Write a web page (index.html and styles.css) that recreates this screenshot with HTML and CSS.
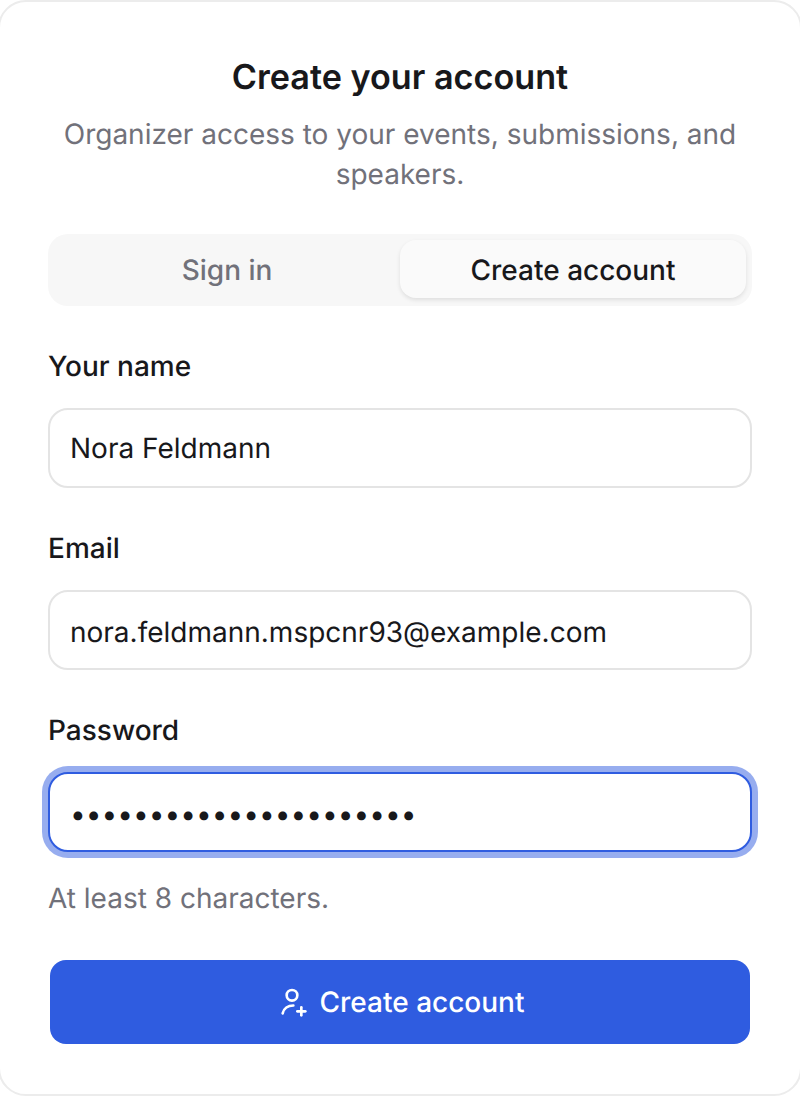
FILE: index.html
```html
<!DOCTYPE html>
<html lang="en">
<head>
<meta charset="utf-8">
<title>Create your account</title>
<link rel="stylesheet" href="styles.css">
</head>
<body>
<main class="card">
  <header class="head">
    <h1 class="title">Create your account</h1>
    <p class="subtitle">Organizer access to your events, submissions, and speakers.</p>
  </header>
  <div class="tabs">
    <button class="tab" type="button">Sign in</button>
    <button class="tab tab-active" type="button">Create account</button>
  </div>
  <form class="form">
    <div class="field">
      <label class="label" for="name">Your name</label>
      <input class="input" id="name" type="text" value="Nora Feldmann">
    </div>
    <div class="field">
      <label class="label" for="email">Email</label>
      <input class="input input-low" id="email" type="email" value="nora.feldmann.mspcnr93@example.com">
    </div>
    <div class="field">
      <label class="label" for="password">Password</label>
      <input class="input input-low input-focus" id="password" type="password" value="nora-feldmann-2024-abc">
      <p class="hint">At least 8 characters.</p>
    </div>
    <button class="submit" type="button">
      <svg class="submit-icon" viewBox="0 0 24 24" fill="none" stroke="currentColor" stroke-width="2" stroke-linecap="round" stroke-linejoin="round" aria-hidden="true">
        <circle cx="12" cy="7" r="4"/>
        <path d="M5 20.5C5.8 17 9 14.6 13 14.6"/>
        <path d="M19 16v6"/>
        <path d="M16 19h6"/>
      </svg>
      <span>Create account</span>
    </button>
  </form>
</main>
</body>
</html>
```

FILE: styles.css
```css
* { box-sizing: border-box; }
html, body { margin: 0; padding: 0; background: #fff; }
body {
  width: 800px;
  height: 1096px;
  overflow: hidden;
  font-family: Inter, "Liberation Sans", sans-serif;
  color: #18181b;
  text-rendering: geometricPrecision;
}
.card {
  width: 804px;
  height: 1096px;
  margin-left: -2px;
  border: 2px solid #ececec;
  border-radius: 28px;
  background: #fff;
  padding: 54px 48px 0;
}
.head { text-align: center; }
.title {
  margin: 0;
  font-size: 34.2px;
  line-height: 44px;
  font-weight: 600;
  color: #18181b;
}
.subtitle {
  margin: 14px 0 0;
  font-size: 28px;
  line-height: 40px;
  color: #71717a;
}
.tabs {
  margin-top: 40px;
  height: 72px;
  padding: 6px;
  background: #f7f7f7;
  border-radius: 20px;
  display: grid;
  grid-template-columns: 1fr 1fr;
  align-items: start;
}
.tab {
  height: 58px;
  border: 0;
  border-radius: 16px;
  background: transparent;
  font: 500 28px/40px Inter, "Liberation Sans", sans-serif;
  color: #71717a;
  padding: 1px 0 0;
  text-rendering: geometricPrecision;
}
.tab-active {
  background: #fafafa;
  color: #18181b;
  box-shadow: 0 2px 4px rgba(0, 0, 0, 0.1);
}
.form { display: flex; flex-direction: column; }
.field { margin-top: 42px; display: flex; flex-direction: column; }
.label {
  font-size: 28px;
  line-height: 36px;
  font-weight: 500;
  color: #18181b;
  margin-bottom: 24px;
}
.input {
  width: 100%;
  height: 80px;
  border: 2px solid #e4e4e4;
  border-radius: 20px;
  background: #fff;
  padding: 0 20px;
  font: 400 28px Inter, "Liberation Sans", sans-serif;
  color: #18181b;
  outline: 0;
  text-rendering: geometricPrecision;
}
.input-low { padding-top: 4px; }
.input-focus {
  border-color: #2f5ce0;
  box-shadow: 0 0 0 6px rgba(47, 92, 224, 0.5);
}
.hint {
  margin: 26px 0 0;
  font-size: 28px;
  line-height: 40px;
  color: #71717a;
}
.submit {
  margin: 42px 2px 0;
  height: 84px;
  border: 0;
  border-radius: 16px;
  background: #2f5ce0;
  color: #fff;
  font: 500 28px/40px Inter, "Liberation Sans", sans-serif;
  display: flex;
  align-items: center;
  justify-content: center;
  gap: 12px;
  padding: 0;
  text-rendering: geometricPrecision;
}
.submit-icon { width: 32px; height: 32px; flex: none; }
```
